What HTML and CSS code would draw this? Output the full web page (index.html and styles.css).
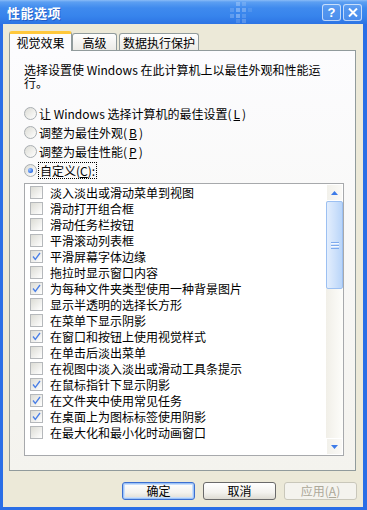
FILE: index.html
```html
<!DOCTYPE html>
<html>
<head>
  <meta charset="utf-8">
  <meta name="viewport" content="width=device-width, initial-scale=1.0">
  <link rel="stylesheet" href="styles.css">
</head>

<body>
  <div class="window">
    <header class="titlebar">
      <span class="title">性能选项</span>
      <svg class="deco" width="26" height="22" viewBox="0 0 26 22">
        <rect x="9" y="1" width="4" height="4" fill="#fff" opacity="0.25"/>
        <rect x="15" y="1" width="4" height="4" fill="#fff" opacity="0.15"/>
        <rect x="3" y="7" width="4" height="4" fill="#fff" opacity="0.15"/>
        <rect x="9" y="7" width="4" height="4" fill="#fff" opacity="0.3"/>
        <rect x="15" y="7" width="4" height="4" fill="#fff" opacity="0.25"/>
        <rect x="21" y="7" width="4" height="4" fill="#fff" opacity="0.1"/>
        <rect x="3" y="13" width="4" height="4" fill="#fff" opacity="0.2"/>
        <rect x="9" y="13" width="4" height="4" fill="#fff" opacity="0.3"/>
        <rect x="15" y="13" width="4" height="4" fill="#fff" opacity="0.15"/>
        <rect x="9" y="18" width="4" height="4" fill="#fff" opacity="0.15"/>
        <rect x="15" y="18" width="4" height="4" fill="#fff" opacity="0.2"/>
      </svg>
      <div class="caption-buttons">
        <span class="cap-btn">?</span>
        <span class="cap-btn">
          <svg width="10" height="9" viewBox="0 0 10 9"><path d="M1 0.5 L9 8.5 M9 0.5 L1 8.5" stroke="#fff" stroke-width="2"/></svg>
        </span>
      </div>
    </header>

    <div class="frame">
      <nav class="tabs">
        <div class="tab active">视觉效果</div>
        <div class="tab">高级</div>
        <div class="tab">数据执行保护</div>
      </nav>

      <section class="panel">
        <p class="intro">选择设置使 Windows 在此计算机上以最佳外观和性能运行。</p>

        <div class="radios">
          <label class="radio"><span class="radio-mark"></span>让 Windows 选择计算机的最佳设置(<u>L</u>)</label>
          <label class="radio"><span class="radio-mark"></span>调整为最佳外观(<u>B</u>)</label>
          <label class="radio"><span class="radio-mark"></span>调整为最佳性能(<u>P</u>)</label>
          <label class="radio"><span class="radio-mark on"></span><span class="focus">自定义(<u>C</u>):</span></label>
        </div>

        <div class="listbox">
          <ul class="items">
            <li><span class="check"></span>淡入淡出或滑动菜单到视图</li>
            <li><span class="check"></span>滑动打开组合框</li>
            <li><span class="check"></span>滑动任务栏按钮</li>
            <li><span class="check"></span>平滑滚动列表框</li>
            <li><span class="check on"></span>平滑屏幕字体边缘</li>
            <li><span class="check"></span>拖拉时显示窗口内容</li>
            <li><span class="check on"></span>为每种文件夹类型使用一种背景图片</li>
            <li><span class="check"></span>显示半透明的选择长方形</li>
            <li><span class="check"></span>在菜单下显示阴影</li>
            <li><span class="check on"></span>在窗口和按钮上使用视觉样式</li>
            <li><span class="check"></span>在单击后淡出菜单</li>
            <li><span class="check"></span>在视图中淡入淡出或滑动工具条提示</li>
            <li><span class="check on"></span>在鼠标指针下显示阴影</li>
            <li><span class="check on"></span>在文件夹中使用常见任务</li>
            <li><span class="check on"></span>在桌面上为图标标签使用阴影</li>
            <li><span class="check"></span>在最大化和最小化时动画窗口</li>
          </ul>
          <div class="scrollbar">
            <div class="sb-btn">
              <svg width="7" height="4" viewBox="0 0 7 4"><path d="M3.5 0 L7 4 L0 4 Z" fill="#3d7be8"/></svg>
            </div>
            <div class="sb-thumb"><span class="grip"></span></div>
            <div class="sb-track"></div>
            <div class="sb-btn">
              <svg width="7" height="4" viewBox="0 0 7 4"><path d="M0 0 L7 0 L3.5 4 Z" fill="#3d7be8"/></svg>
            </div>
          </div>
        </div>
      </section>

      <div class="buttons">
        <button class="btn default">确定</button>
        <button class="btn">取消</button>
        <button class="btn disabled">应用(<u>A</u>)</button>
      </div>
    </div>
  </div>
</body>
</html>
```

FILE: styles.css
```css
* {
  box-sizing: border-box;
}

body {
  margin: 0;
  font-family: "Noto Sans CJK SC", "Liberation Sans", sans-serif;
  font-size: 12px;
  color: #000;
}

.window {
  width: 367px;
  height: 510px;
  display: flex;
  flex-direction: column;
}

/* title bar */
.titlebar {
  position: relative;
  height: 24px;
  display: flex;
  align-items: center;
  padding: 0 5px 0 7px;
  background: linear-gradient(#8abcf7 0, #5c9ff2 2px, #3f8aee 8px, #3784ec 16px, #2d74e4 24px);
}

.title {
  color: #fff;
  font-weight: bold;
  font-size: 13px;
  letter-spacing: 0.5px;
  text-shadow: 1px 1px 0 rgba(10, 40, 140, 0.4);
}

.deco {
  position: absolute;
  left: 227px;
  top: 1px;
}

.caption-buttons {
  margin-left: auto;
  display: flex;
  gap: 2px;
}

.cap-btn {
  width: 19px;
  height: 17px;
  display: flex;
  align-items: center;
  justify-content: center;
  border: 1px solid rgba(255, 255, 255, 0.65);
  border-radius: 3px;
  background: rgba(255, 255, 255, 0.12);
  color: #fff;
  font-family: "Liberation Sans", sans-serif;
  font-weight: bold;
  font-size: 13px;
}

/* window body */
.frame {
  flex: 1;
  display: flex;
  flex-direction: column;
  background: #ece9d8;
  border: 3px solid #2a6ee6;
  border-top: none;
  border-right-width: 4px;
}

.tabs {
  display: flex;
  align-items: flex-end;
  height: 19px;
  margin: 7px 0 0 6px;
}

.tab {
  height: 17px;
  padding-top: 1px;
  display: flex;
  align-items: center;
  justify-content: center;
  border: 1px solid #919b9c;
  border-bottom: none;
  border-radius: 3px 3px 0 0;
  background: linear-gradient(#fefefe, #ecebe6);
}

.tab:nth-child(2) {
  width: 45px;
}

.tab:nth-child(3) {
  width: 80px;
  margin-left: 2px;
}

.tab.active {
  position: relative;
  z-index: 1;
  width: 63px;
  height: 20px;
  margin-bottom: -1px;
  padding-top: 0;
  border-top: 3px solid #ffc83c;
  background: #fcfcfe;
}

.panel {
  width: 347px;
  height: 421px;
  margin-left: 6px;
  padding: 12px 0 0 14px;
  border: 1px solid #919b9c;
  background: linear-gradient(#fcfcfe, #f4f3ee);
}

.intro {
  margin: 0;
  width: 300px;
  line-height: 13px;
}

.radios {
  margin-top: 15px;
  display: flex;
  flex-direction: column;
}

.radio {
  height: 19px;
  display: flex;
  align-items: center;
  gap: 2px;
}

.radio-mark {
  width: 13px;
  height: 13px;
  border: 1px solid #a9aeb2;
  border-radius: 50%;
  background: linear-gradient(135deg, #dcdcd5, #ffffff);
  display: flex;
  align-items: center;
  justify-content: center;
}

.radio-mark.on::after {
  content: "";
  width: 5px;
  height: 5px;
  border-radius: 50%;
  background: radial-gradient(circle at 35% 35%, #9fc4ff, #2f6fe6 70%);
}

.focus {
  outline: 1px dotted #000;
  padding: 0 1px;
  line-height: 15px;
}

/* list with checkboxes */
.listbox {
  margin-top: 3px;
  width: 320px;
  height: 273px;
  border: 1px solid #a7a9ac;
  background: #fff;
  display: flex;
}

.items {
  flex: 1;
  margin: 0;
  padding: 0;
  list-style: none;
}

.items li {
  height: 16px;
  display: flex;
  align-items: center;
  gap: 7px;
  padding-left: 5px;
  white-space: nowrap;
}

.check {
  width: 13px;
  height: 13px;
  flex: none;
  border: 1px solid #b5b8bb;
  background: linear-gradient(135deg, #dcdcd5, #ffffff);
}

.check.on {
  background:
    url("data:image/svg+xml,%3Csvg xmlns='http://www.w3.org/2000/svg' width='11' height='11'%3E%3Cpath d='M2 5.5 L4.3 8.5 L9 2' fill='none' stroke='%234a7fe6' stroke-width='1.3'/%3E%3C/svg%3E") no-repeat center,
    linear-gradient(135deg, #dcdcd5, #ffffff);
}

.scrollbar {
  width: 17px;
  display: flex;
  flex-direction: column;
  background: linear-gradient(90deg, #f1efe8, #fdfdfa);
}

.sb-btn {
  height: 17px;
  display: flex;
  align-items: center;
  justify-content: center;
  border: 1px solid #fff;
  background: linear-gradient(90deg, #f2f1eb, #faf9f6);
}

.sb-thumb {
  height: 88px;
  display: flex;
  align-items: center;
  justify-content: center;
  border: 1px solid #9cc0f2;
  border-radius: 2px;
  background: linear-gradient(90deg, #e3eefd, #cfe2fb 50%, #b9d5f9);
}

.grip {
  width: 8px;
  height: 7px;
  background: repeating-linear-gradient(#7eaaee 0, #7eaaee 1px, #f4f8ff 1px, #f4f8ff 2px, transparent 2px, transparent 3px);
}

.sb-track {
  flex: 1;
}

/* dialog buttons */
.buttons {
  display: flex;
  justify-content: flex-end;
  gap: 8px;
  margin-top: 11px;
  padding-right: 6px;
}

.btn {
  width: 73px;
  height: 18px;
  padding: 0;
  font-family: inherit;
  font-size: 12px;
  line-height: 14px;
  color: #000;
  border: 1px solid #6a6a6a;
  border-radius: 3px;
  background: linear-gradient(#ffffff, #f3f2ee 60%, #dedcd3);
}

.btn.default {
  border-color: #3c6fd0;
  box-shadow: inset 0 0 0 1px #9cc3f7, inset 0 0 0 2px #c9defb;
}

.btn.disabled {
  color: #aca899;
  border-color: #c9c7ba;
  background: #f4f3ee;
}
```
